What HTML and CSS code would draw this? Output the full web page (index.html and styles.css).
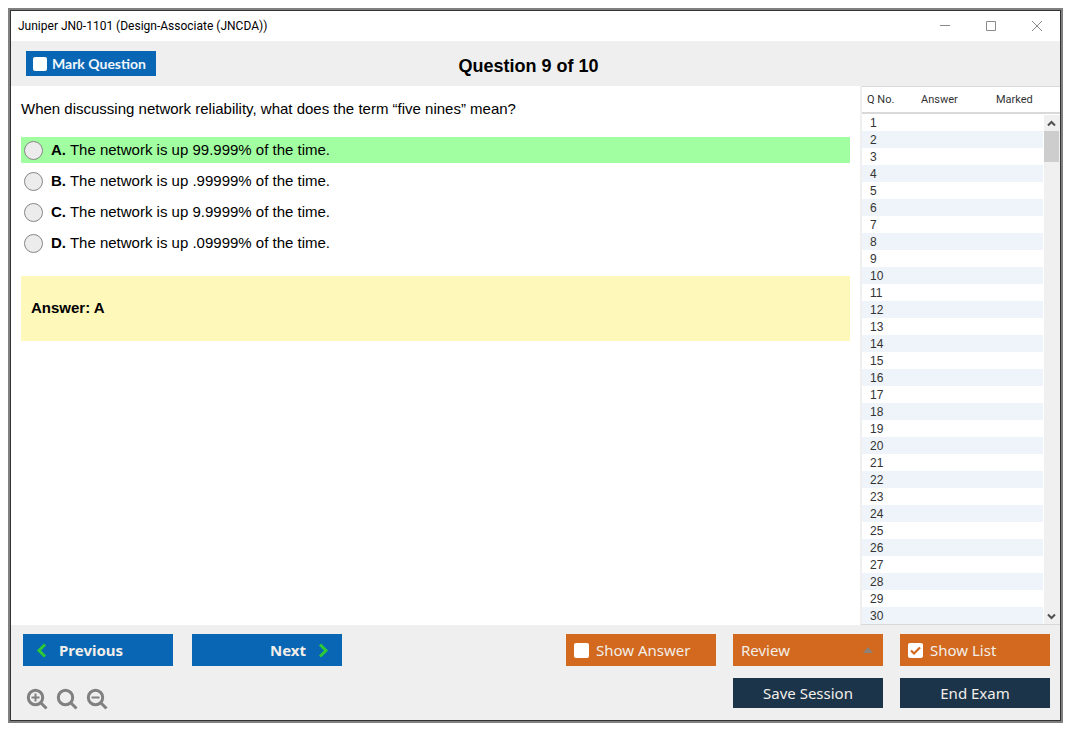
FILE: index.html
```html
<!DOCTYPE html>
<html lang="en">
<head>
    <meta charset="UTF-8">
    <meta name="viewport" content="width=device-width, initial-scale=1.0">
    <title>Juniper JN0-1101</title>
    <link rel="stylesheet" href="styles.css">
</head>
<body>
    <div class="window">
        <div class="title-bar">
            <span class="title">Juniper JN0-1101 (Design-Associate (JNCDA))</span>
            <div class="window-controls">
                <button class="window-button" aria-label="Minimize"><svg width="12" height="12" viewBox="0 0 12 12"><path d="M1 5.5h10"/></svg></button>
                <button class="window-button" aria-label="Maximize"><svg width="12" height="12" viewBox="0 0 12 12"><path d="M1.5 1.5h9v9h-9z"/></svg></button>
                <button class="window-button" aria-label="Close"><svg width="12" height="12" viewBox="0 0 12 12"><path d="M1 1l10 10M11 1L1 11"/></svg></button>
            </div>
        </div>

        <header class="header">
            <label class="mark-question"><input type="checkbox" class="check"> Mark Question</label>
            <h1>Question 9 of 10</h1>
        </header>

        <div class="content">
            <main class="question">
                <p class="question-text">When discussing network reliability, what does the term “five nines” mean?</p>
                <div class="options">
                    <label class="option correct"><input type="radio" name="answer"><span><b>A.</b> The network is up 99.999% of the time.</span></label>
                    <label class="option"><input type="radio" name="answer"><span><b>B.</b> The network is up .99999% of the time.</span></label>
                    <label class="option"><input type="radio" name="answer"><span><b>C.</b> The network is up 9.9999% of the time.</span></label>
                    <label class="option"><input type="radio" name="answer"><span><b>D.</b> The network is up .09999% of the time.</span></label>
                </div>
                <div class="answer">Answer: A</div>
            </main>

            <aside class="list">
                <div class="list-scroll">
                    <table>
                        <thead>
                            <tr><th class="col-no">Q No.</th><th class="col-answer">Answer</th><th>Marked</th></tr>
                        </thead>
                        <tbody>
                            <tr><td>1</td><td></td><td></td></tr>
                            <tr><td>2</td><td></td><td></td></tr>
                            <tr><td>3</td><td></td><td></td></tr>
                            <tr><td>4</td><td></td><td></td></tr>
                            <tr><td>5</td><td></td><td></td></tr>
                            <tr><td>6</td><td></td><td></td></tr>
                            <tr><td>7</td><td></td><td></td></tr>
                            <tr><td>8</td><td></td><td></td></tr>
                            <tr><td>9</td><td></td><td></td></tr>
                            <tr><td>10</td><td></td><td></td></tr>
                            <tr><td>11</td><td></td><td></td></tr>
                            <tr><td>12</td><td></td><td></td></tr>
                            <tr><td>13</td><td></td><td></td></tr>
                            <tr><td>14</td><td></td><td></td></tr>
                            <tr><td>15</td><td></td><td></td></tr>
                            <tr><td>16</td><td></td><td></td></tr>
                            <tr><td>17</td><td></td><td></td></tr>
                            <tr><td>18</td><td></td><td></td></tr>
                            <tr><td>19</td><td></td><td></td></tr>
                            <tr><td>20</td><td></td><td></td></tr>
                            <tr><td>21</td><td></td><td></td></tr>
                            <tr><td>22</td><td></td><td></td></tr>
                            <tr><td>23</td><td></td><td></td></tr>
                            <tr><td>24</td><td></td><td></td></tr>
                            <tr><td>25</td><td></td><td></td></tr>
                            <tr><td>26</td><td></td><td></td></tr>
                            <tr><td>27</td><td></td><td></td></tr>
                            <tr><td>28</td><td></td><td></td></tr>
                            <tr><td>29</td><td></td><td></td></tr>
                            <tr><td>30</td><td></td><td></td></tr>
                        </tbody>
                    </table>
                </div>
                <!-- Scrollbar sits over the right edge of the table -->
                <div class="scrollbar">
                    <button aria-label="Scroll up"><svg width="9" height="7" viewBox="0 0 9 7"><path d="M1 5.5L4.5 2 8 5.5"/></svg></button>
                    <div class="thumb"></div>
                    <button class="scroll-down" aria-label="Scroll down"><svg width="9" height="7" viewBox="0 0 9 7"><path d="M1 1.5L4.5 5 8 1.5"/></svg></button>
                </div>
            </aside>
        </div>

        <footer class="footer">
            <div class="footer-row">
                <button class="btn nav"><svg width="11" height="15" viewBox="0 0 11 15"><path d="M9 1.5l-6 6 6 6"/></svg> Previous</button>
                <button class="btn nav next">Next <svg width="11" height="15" viewBox="0 0 11 15"><path d="M2 1.5l6 6-6 6"/></svg></button>
                <div class="actions">
                    <label class="btn orange"><input type="checkbox" class="check"> Show Answer</label>
                    <button class="btn orange review">Review <svg width="10" height="6" viewBox="0 0 10 6"><path d="M0 6l5-6 5 6z"/></svg></button>
                    <label class="btn orange"><input type="checkbox" class="check" checked> Show List</label>
                </div>
            </div>
            <div class="footer-row">
                <div class="zoom">
                    <button aria-label="Zoom in"><svg width="22" height="22" viewBox="0 0 22 22"><circle cx="9.5" cy="9.5" r="7.2"/><path d="M14.5 14.5l6 6"/><path class="sign" d="M5.5 9.5h8M9.500 5.500v8"/></svg></button>
                    <button aria-label="Reset zoom"><svg width="22" height="22" viewBox="0 0 22 22"><circle cx="9.5" cy="9.5" r="7.2"/><path d="M14.5 14.5l6 6"/></svg></button>
                    <button aria-label="Zoom out"><svg width="22" height="22" viewBox="0 0 22 22"><circle cx="9.5" cy="9.5" r="7.2"/><path d="M14.5 14.5l6 6"/><path class="sign" d="M5.5 9.5h8"/></svg></button>
                </div>
                <div class="actions">
                    <button class="btn dark">Save Session</button>
                    <button class="btn dark">End Exam</button>
                </div>
            </div>
        </footer>
    </div>
</body>
</html>
```
FILE: styles.css
```css
/* Base styles */
:root {
    --panel-bg: #efefef;
    --blue: #0866b4;
    --orange: #d2691e;
    --dark: #1b344a;
    --correct: #a1ffa1;
    --answer-bg: #fff8bb;
    --row-alt: #eef4f9;
}

* {
    box-sizing: border-box;
}

body {
    margin: 0;
    height: 100vh;
    padding: 8px 12px 12px 8px;
    background-color: #fff;
    color: #000;
    font-family: 'Liberation Sans', Arial, sans-serif;
}

button {
    margin: 0;
    padding: 0;
    border: none;
    background: none;
    cursor: pointer;
}

svg {
    display: block;
    fill: none;
    flex: none;
}

/* Window */
.window {
    display: flex;
    flex-direction: column;
    height: 100%;
    border: 2px solid #808080;
    outline: 1px solid #333;
    outline-offset: -3px;
    padding: 1px;
}

.title-bar {
    display: flex;
    align-items: center;
    justify-content: space-between;
    height: 30px;
    padding-left: 7px;
    font-family: Roboto, sans-serif;
    font-size: 12px;
}

.window-controls {
    display: flex;
}

.window-button {
    display: flex;
    align-items: center;
    justify-content: center;
    width: 46px;
    height: 28px;
}

.window-button svg {
    stroke: #8a8a8a;
}

/* Header */
.header {
    display: grid;
    grid-template-columns: 1fr auto 1fr;
    align-items: center;
    height: 45px;
    padding: 0 29px 0 15px;
    background-color: var(--panel-bg);
}

.header h1 {
    margin: 4px 0 0;
    font-size: 18px;
    line-height: 20px;
}

.mark-question {
    display: flex;
    align-items: center;
    gap: 5px;
    width: 130px;
    height: 25px;
    padding-left: 7px;
    background-color: var(--blue);
    color: #f0f6fc;
    font-family: Lato, sans-serif;
    font-size: 14px;
    font-weight: bold;
    white-space: nowrap;
}

.check {
    appearance: none;
    flex: none;
    width: 14px;
    height: 14px;
    margin: 0;
    border-radius: 2px;
    background-color: #fff;
}

/* Question */
.content {
    display: flex;
    flex: 1;
    min-height: 0;
}

.question {
    flex: 1;
    padding: 14px 10px;
    font-size: 15px;
    line-height: 18px;
}

.question-text {
    margin: 0 0 19px;
}

.options {
    display: flex;
    flex-direction: column;
    gap: 5px;
}

.option {
    display: flex;
    align-items: center;
    gap: 8px;
    height: 26px;
    padding-left: 3px;
}

.option input {
    appearance: none;
    width: 19px;
    height: 19px;
    margin: 0;
    border: 1px solid #858585;
    border-radius: 50%;
    background-color: #ececec;
}

.correct {
    background-color: var(--correct);
}

.answer {
    margin-top: 20px;
    padding: 23px 10px 24px;
    background-color: var(--answer-bg);
    font-weight: bold;
}

/* Question list */
.list {
    position: relative;
    width: 200px;
    border-left: 2px solid var(--panel-bg);
    border-bottom: 1px solid #d9d9d9;
}

.list-scroll {
    height: 100%;
    overflow: hidden;
}

.list table {
    width: 100%;
    border-collapse: separate;
    border-spacing: 0;
    table-layout: fixed;
    font-size: 12px;
    color: #333;
}

.list th {
    height: 28px;
    padding: 0 0 0 5px;
    border-top: 1px solid #d9d9d9;
    border-bottom: 2px solid #d9d9d9;
    font-family: Roboto, sans-serif;
    font-size: 11px;
    font-weight: normal;
    text-align: left;
}

.col-no {
    width: 54px;
}

.col-answer {
    width: 75px;
}

.list td {
    height: 17px;
    padding: 2px 0 0 8px;
    line-height: 15px;
}

.list tbody tr:nth-child(even) {
    background-color: var(--row-alt);
}

.scrollbar {
    position: absolute;
    top: 29px;
    right: 0;
    bottom: 0;
    display: flex;
    flex-direction: column;
    width: 17px;
    padding-right: 1px;
    border-left: 1px solid #fff;
    background-color: #f0f0f0;
}

.scrollbar button {
    display: flex;
    align-items: center;
    justify-content: center;
    height: 16px;
}

.scrollbar svg {
    stroke: #505050;
    stroke-width: 2;
}

.thumb {
    height: 31px;
    background-color: #cdcdcd;
}

.scrollbar .scroll-down {
    margin-top: auto;
}

/* Footer */
.footer {
    display: flex;
    flex-direction: column;
    gap: 12px;
    padding: 9px 10px 10px 12px;
    background-color: var(--panel-bg);
}

.footer-row {
    display: flex;
    align-items: flex-start;
}

.actions {
    display: flex;
    gap: 17px;
    margin-left: auto;
}

.btn {
    display: flex;
    align-items: center;
    width: 150px;
    height: 32px;
    color: #f2eee9;
    font-family: 'Noto Sans', sans-serif;
    font-size: 15px;
    white-space: nowrap;
}

.nav {
    gap: 12px;
    padding: 0 13px;
    background-color: var(--blue);
    font-weight: bold;
}

.nav svg {
    stroke: #2dc937;
    stroke-width: 3;
}

.next {
    justify-content: flex-end;
    margin-left: 19px;
}

.orange {
    gap: 7px;
    padding: 0 8px;
    background-color: var(--orange);
}

.orange .check {
    width: 15px;
    height: 15px;
}

.check:checked {
    background-image: url("data:image/svg+xml,%3Csvg xmlns='http://www.w3.org/2000/svg' viewBox='0 0 15 15'%3E%3Cpath d='M3 7.5l3 3 6-6' fill='none' stroke='%23d2691e' stroke-width='2.2'/%3E%3C/svg%3E");
}

.review {
    justify-content: space-between;
    padding-right: 10px;
}

.review svg {
    fill: #8c8279;
}

.dark {
    justify-content: center;
    height: 30px;
    background-color: var(--dark);
}

.zoom {
    display: flex;
    gap: 8px;
    padding: 10px 0 0 3px;
}

.zoom svg {
    stroke: #808080;
    stroke-width: 3;
}

.zoom .sign {
    stroke-width: 2;
}
```
